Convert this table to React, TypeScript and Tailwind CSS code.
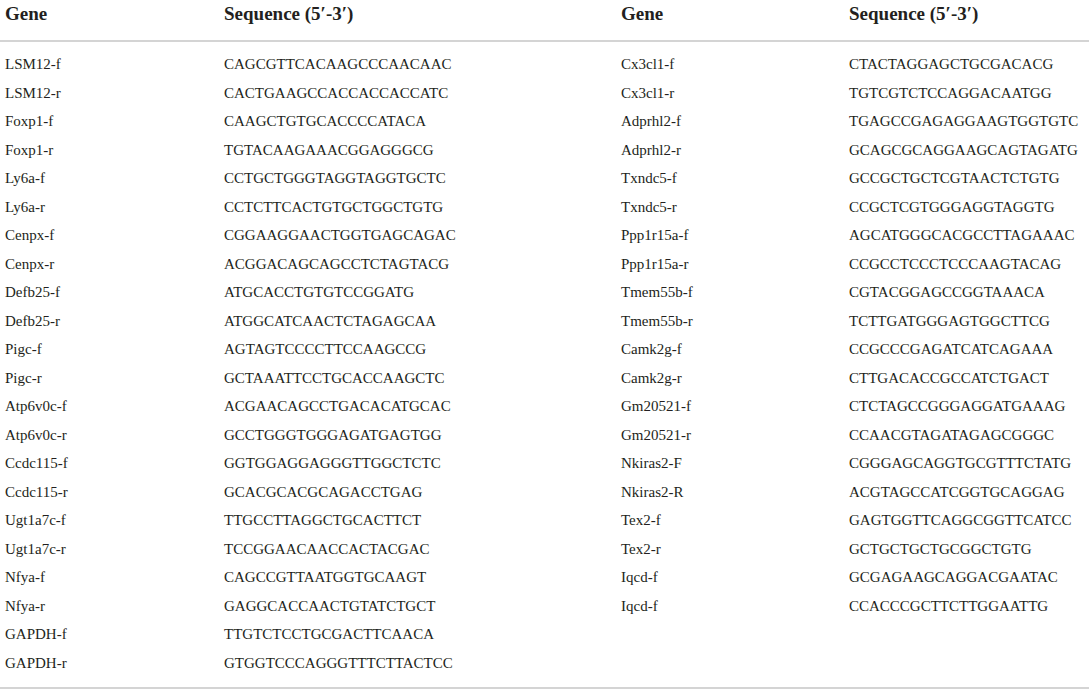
const left: [string, string][] = [
  ['LSM12-f', 'CAGCGTTCACAAGCCCAACAAC'],
  ['LSM12-r', 'CACTGAAGCCACCACCACCATC'],
  ['Foxp1-f', 'CAAGCTGTGCACCCCATACA'],
  ['Foxp1-r', 'TGTACAAGAAACGGAGGGCG'],
  ['Ly6a-f', 'CCTGCTGGGTAGGTAGGTGCTC'],
  ['Ly6a-r', 'CCTCTTCACTGTGCTGGCTGTG'],
  ['Cenpx-f', 'CGGAAGGAACTGGTGAGCAGAC'],
  ['Cenpx-r', 'ACGGACAGCAGCCTCTAGTACG'],
  ['Defb25-f', 'ATGCACCTGTGTCCGGATG'],
  ['Defb25-r', 'ATGGCATCAACTCTAGAGCAA'],
  ['Pigc-f', 'AGTAGTCCCCTTCCAAGCCG'],
  ['Pigc-r', 'GCTAAATTCCTGCACCAAGCTC'],
  ['Atp6v0c-f', 'ACGAACAGCCTGACACATGCAC'],
  ['Atp6v0c-r', 'GCCTGGGTGGGAGATGAGTGG'],
  ['Ccdc115-f', 'GGTGGAGGAGGGTTGGCTCTC'],
  ['Ccdc115-r', 'GCACGCACGCAGACCTGAG'],
  ['Ugt1a7c-f', 'TTGCCTTAGGCTGCACTTCT'],
  ['Ugt1a7c-r', 'TCCGGAACAACCACTACGAC'],
  ['Nfya-f', 'CAGCCGTTAATGGTGCAAGT'],
  ['Nfya-r', 'GAGGCACCAACTGTATCTGCT'],
  ['GAPDH-f', 'TTGTCTCCTGCGACTTCAACA'],
  ['GAPDH-r', 'GTGGTCCCAGGGTTTCTTACTCC'],
]

const right: [string, string][] = [
  ['Cx3cl1-f', 'CTACTAGGAGCTGCGACACG'],
  ['Cx3cl1-r', 'TGTCGTCTCCAGGACAATGG'],
  ['Adprhl2-f', 'TGAGCCGAGAGGAAGTGGTGTC'],
  ['Adprhl2-r', 'GCAGCGCAGGAAGCAGTAGATG'],
  ['Txndc5-f', 'GCCGCTGCTCGTAACTCTGTG'],
  ['Txndc5-r', 'CCGCTCGTGGGAGGTAGGTG'],
  ['Ppp1r15a-f', 'AGCATGGGCACGCCTTAGAAAC'],
  ['Ppp1r15a-r', 'CCGCCTCCCTCCCAAGTACAG'],
  ['Tmem55b-f', 'CGTACGGAGCCGGTAAACA'],
  ['Tmem55b-r', 'TCTTGATGGGAGTGGCTTCG'],
  ['Camk2g-f', 'CCGCCCGAGATCATCAGAAA'],
  ['Camk2g-r', 'CTTGACACCGCCATCTGACT'],
  ['Gm20521-f', 'CTCTAGCCGGGAGGATGAAAG'],
  ['Gm20521-r', 'CCAACGTAGATAGAGCGGGC'],
  ['Nkiras2-F', 'CGGGAGCAGGTGCGTTTCTATG'],
  ['Nkiras2-R', 'ACGTAGCCATCGGTGCAGGAG'],
  ['Tex2-f', 'GAGTGGTTCAGGCGGTTCATCC'],
  ['Tex2-r', 'GCTGCTGCTGCGGCTGTG'],
  ['Iqcd-f', 'GCGAGAAGCAGGACGAATAC'],
  ['Iqcd-f', 'CCACCCGCTTCTTGGAATTG'],
]

// shared column template so header and body line up
const cols = 'grid grid-cols-[219px_397px_228px_1fr] pl-[5px]'

function App() {
  return (
    <div className="w-[1089px] h-[693px] bg-white text-[#231f20] font-['Liberation_Serif',serif]">
      <div className={`${cols} h-[40px] items-center pb-[12px] text-[19px] font-bold`}>
        <div>Gene</div>
        <div>Sequence (5′-3′)</div>
        <div>Gene</div>
        <div>Sequence (5′-3′)</div>
      </div>
      <div className="h-[2px] bg-[#d4d4d4]" />
      <div className="pt-[8px] pb-[10px] text-[15px]">
        {left.map((row, i) => (
          <div key={i} className={`${cols} h-[28.5px] items-center`}>
            <div>{row[0]}</div>
            <div>{row[1]}</div>
            <div>{right[i]?.[0]}</div>
            <div>{right[i]?.[1]}</div>
          </div>
        ))}
      </div>
      <div className="h-[2px] bg-[#d4d4d4]" />
    </div>
  )
}

export default App
